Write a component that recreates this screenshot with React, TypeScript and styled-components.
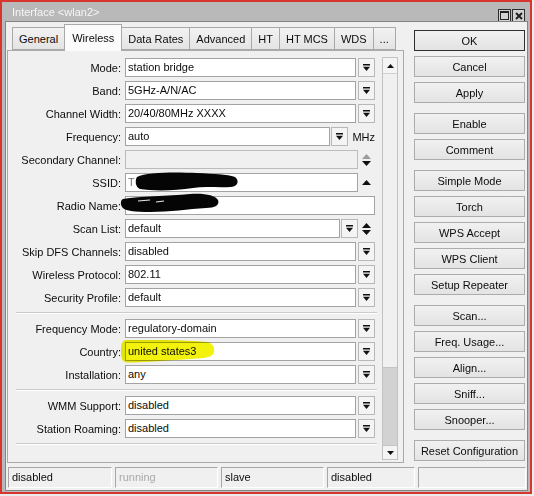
import React from 'react'
import styled, { createGlobalStyle } from 'styled-components'

const GlobalStyle = createGlobalStyle`
  html, body {
    margin: 0;
    padding: 0;
    background: #ececec;
  }
  body {
    font-family: "Liberation Sans", Arial, sans-serif;
    font-size: 11px;
    color: #0c0c0c;
  }
`

type FieldKind = 'drop' | 'freq' | 'disabled' | 'ssid' | 'plain' | 'scan'

type RowDef = {
  label: string
  value?: string
  kind: FieldKind
}

const rowGroups: RowDef[][] = [
  [
    { label: 'Mode:', value: 'station bridge', kind: 'drop' },
    { label: 'Band:', value: '5GHz-A/N/AC', kind: 'drop' },
    { label: 'Channel Width:', value: '20/40/80MHz XXXX', kind: 'drop' },
    { label: 'Frequency:', value: 'auto', kind: 'freq' },
    { label: 'Secondary Channel:', kind: 'disabled' },
    { label: 'SSID:', value: 'T', kind: 'ssid' },
    { label: 'Radio Name:', kind: 'plain' },
    { label: 'Scan List:', value: 'default', kind: 'scan' },
    { label: 'Skip DFS Channels:', value: 'disabled', kind: 'drop' },
    { label: 'Wireless Protocol:', value: '802.11', kind: 'drop' },
    { label: 'Security Profile:', value: 'default', kind: 'drop' }
  ],
  [
    { label: 'Frequency Mode:', value: 'regulatory-domain', kind: 'drop' },
    { label: 'Country:', value: 'united states3', kind: 'drop' },
    { label: 'Installation:', value: 'any', kind: 'drop' }
  ],
  [
    { label: 'WMM Support:', value: 'disabled', kind: 'drop' },
    { label: 'Station Roaming:', value: 'disabled', kind: 'drop' }
  ]
]

const tabs = ['General', 'Wireless', 'Data Rates', 'Advanced', 'HT', 'HT MCS', 'WDS', '...']

const buttonGroups = [
  ['OK', 'Cancel', 'Apply'],
  ['Enable', 'Comment'],
  ['Simple Mode', 'Torch', 'WPS Accept', 'WPS Client', 'Setup Repeater'],
  ['Scan...', 'Freq. Usage...', 'Align...', 'Sniff...', 'Snooper...'],
  ['Reset Configuration']
]

const statusCells = [
  { text: 'disabled', width: 104 },
  { text: 'running', width: 103, muted: true },
  { text: 'slave', width: 103 },
  { text: 'disabled', width: 88 },
  { text: '', width: 0 }
]

const Window = styled.div`
  box-sizing: border-box;
  width: 532px;
  height: 494px;
  border: 2px solid #d8352f;
  background: #b9b9b9;
  padding: 0 2px 1px 3px;
  display: flex;
  flex-direction: column;
`

const TitleBar = styled.div`
  height: 19px;
  display: flex;
  align-items: center;
  padding-left: 7px;
  color: #f6f6f6;
  font-size: 11px;
`

const TitleText = styled.span`
  flex: 1;
`

const TitleButtons = styled.div`
  display: flex;
  gap: 1px;
  align-self: flex-end;
  margin: 0 3px -1px 0;
`

const TitleButton = styled.div`
  box-sizing: border-box;
  width: 13px;
  height: 13px;
  border: 1px solid #2e2e2e;
  background: #d2d2d2;
  display: flex;
  align-items: center;
  justify-content: center;
`

const Client = styled.div`
  flex: 1;
  border: 1px solid #858585;
  background: #f0f0f0;
  display: flex;
  flex-direction: column;
  min-height: 0;
`

const Main = styled.div`
  flex: 1;
  display: flex;
  padding: 2px 0 0 1px;
  min-height: 0;
`

const LeftColumn = styled.div`
  width: 397px;
  display: flex;
  flex-direction: column;
`

const TabBar = styled.div`
  height: 26px;
  display: flex;
  align-items: flex-end;
  padding-left: 5px;
`

const Tab = styled.div<{ $active?: boolean }>`
  box-sizing: border-box;
  height: ${p => (p.$active ? 27 : 23)}px;
  margin-bottom: ${p => (p.$active ? -1 : 0)}px;
  padding: 0 ${p => (p.$active ? 7 : 6)}px;
  display: flex;
  align-items: center;
  border: 1px solid #a9a9a9;
  border-bottom: ${p => (p.$active ? 'none' : '1px solid #a9a9a9')};
  margin-left: -1px;
  background: ${p => (p.$active ? '#fbfbfb' : 'linear-gradient(#f2f2f2, #e4e4e4)')};
  position: relative;
  z-index: ${p => (p.$active ? 2 : 1)};
  white-space: nowrap;
  &:first-child {
    margin-left: 0;
  }
`

const Panel = styled.div`
  flex: 1;
  border: 1px solid #a9a9a9;
  background: #f0f0f0;
  display: flex;
  min-height: 0;
`

const Form = styled.div`
  flex: 1;
  padding-top: 7px;
  display: flex;
  flex-direction: column;
  gap: 4px;
`

const Row = styled.div`
  position: relative;
  height: 19px;
  display: flex;
  align-items: center;
`

const Label = styled.div`
  width: 113px;
  margin-right: 4px;
  text-align: right;
  white-space: nowrap;
`

const Field = styled.div`
  width: 250px;
  height: 19px;
  display: flex;
  align-items: center;
`

const Input = styled.div<{ $disabled?: boolean }>`
  position: relative;
  flex: 1;
  box-sizing: border-box;
  height: 19px;
  border: 1px solid ${p => (p.$disabled ? '#bcbcbc' : '#a3a3a3')};
  background: ${p => (p.$disabled ? '#f0f0f0' : '#ffffff')};
  padding-left: 2px;
  line-height: 17px;
  white-space: nowrap;
`

const DropButton = styled.div<{ $gap: number }>`
  box-sizing: border-box;
  width: 17px;
  height: 19px;
  margin-left: ${p => p.$gap}px;
  border: 1px solid #b8b8b8;
  background: #f4f4f4;
  display: flex;
  align-items: center;
  justify-content: center;
`

const Spinner = styled.div`
  width: 17px;
  height: 19px;
  display: flex;
  flex-direction: column;
  align-items: center;
  justify-content: center;
  gap: 2px;
`

const Suffix = styled.span`
  margin-left: 4px;
`

const Separator = styled.div`
  margin: 1px 5px 1px 8px;
  border-top: 1px solid #cbcbcb;
  border-bottom: 1px solid #ffffff;
`

const Overlay = styled.svg<{ $left: number; $top: number; $blend?: boolean }>`
  position: absolute;
  left: ${p => p.$left}px;
  top: ${p => p.$top}px;
  pointer-events: none;
  mix-blend-mode: ${p => (p.$blend ? 'multiply' : 'normal')};
`

const Scrollbar = styled.div`
  box-sizing: border-box;
  width: 16px;
  margin: 6px 5px 2px 0;
  border: 1px solid #c2c2c2;
  background: #eeeeee;
  display: flex;
  flex-direction: column;
`

const ScrollArrow = styled.div<{ $height: number }>`
  height: ${p => p.$height}px;
  display: flex;
  align-items: center;
  justify-content: center;
  background: #f4f4f4;
`

const ScrollTrack = styled.div`
  flex: 1;
  border-top: 1px solid #d0d0d0;
  background: #f0f0f0;
`

const ScrollThumb = styled.div`
  height: 77px;
  background: #d2d2d2;
  border-top: 1px solid #c4c4c4;
  border-bottom: 1px solid #c4c4c4;
`

const ButtonColumn = styled.div`
  width: 111px;
  margin-left: 10px;
  padding-top: 6px;
  display: flex;
  flex-direction: column;
  gap: 10px;
`

const ButtonGroup = styled.div`
  display: flex;
  flex-direction: column;
  gap: 5px;
`

const Button = styled.div<{ $default?: boolean }>`
  box-sizing: border-box;
  height: 21px;
  border: 1px solid ${p => (p.$default ? '#2f2f2f' : '#acacac')};
  background: linear-gradient(#f1f1f1, #e3e3e3);
  display: flex;
  align-items: center;
  justify-content: center;
  white-space: nowrap;
`

const StatusBar = styled.div`
  height: 21px;
  margin: 4px 1px 2px 2px;
  display: flex;
  gap: 3px;
`

const StatusCell = styled.div<{ $muted?: boolean }>`
  box-sizing: border-box;
  height: 21px;
  border: 1px solid;
  border-color: #a6a6a6 #ffffff #ffffff #a6a6a6;
  padding-left: 3px;
  line-height: 19px;
  color: ${p => (p.$muted ? '#a9a9a9' : '#0c0c0c')};
  white-space: nowrap;
`

const DropIcon = () => (
  <svg width="9" height="8" viewBox="0 0 9 8">
    <rect x="1" y="0" width="7" height="1.5" fill="#111" />
    <path d="M1 2.8h7L4.5 7z" fill="#111" />
  </svg>
)

const Triangle = ({ up, color }: { up?: boolean; color: string }) => (
  <svg width="9" height="5" viewBox="0 0 9 5">
    <path d={up ? 'M0 5h9L4.5 0z' : 'M0 0h9L4.5 5z'} fill={color} />
  </svg>
)

const SsidBlob = () => (
  <Overlay $left={9} $top={-2} width="104" height="20" viewBox="0 0 104 20">
    <path
      d="M2 5C12 0 40 0 62 1C78 2 92 2 100 5C104 8 104 14 96 15C82 16 70 14 58 16C40 19 16 19 5 17C0 15 0 8 2 5Z"
      fill="#050505"
    />
  </Overlay>
)

const RadioBlob = () => (
  <Overlay $left={112} $top={-3} width="100" height="21" viewBox="0 0 100 21">
    <path
      d="M3 6C20 3 48 3 70 1C84 0 95 2 98 7C100 12 95 15 86 15C68 16 50 19 30 19C15 19 4 18 2 14C0 10 1 7 3 6Z"
      fill="#050505"
    />
    <path d="M18 8L30 7M36 9L44 8" stroke="#e8e8e8" strokeWidth="1.2" />
  </Overlay>
)

const Highlight = () => (
  <Overlay $left={113} $top={-2} $blend width="94" height="23" viewBox="0 0 94 23">
    <path
      d="M5 0C35 -0.5 65 0 86 2C92 3 94 8 93 12C92 17 86 18 70 19C50 20 25 22.5 6 22.5C1 22.5 0 17 0 11C0 5 1 0 5 0Z"
      fill="#f2f20c"
    />
  </Overlay>
)

const renderField = (row: RowDef) => {
  switch (row.kind) {
    case 'drop':
      return (
        <>
          <Input>{row.value}</Input>
          <DropButton $gap={2}><DropIcon /></DropButton>
        </>
      )
    case 'freq':
      return (
        <>
          <Input>{row.value}</Input>
          <DropButton $gap={1}><DropIcon /></DropButton>
          <Suffix>MHz</Suffix>
        </>
      )
    case 'disabled':
      return (
        <>
          <Input $disabled />
          <Spinner>
            <Triangle up color="#9c9c9c" />
            <Triangle color="#111" />
          </Spinner>
        </>
      )
    case 'ssid':
      return (
        <>
          <Input style={{ color: '#777' }}>
            {row.value}
            <SsidBlob />
          </Input>
          <Spinner>
            <Triangle up color="#111" />
          </Spinner>
        </>
      )
    case 'scan':
      return (
        <>
          <Input>{row.value}</Input>
          <DropButton $gap={1}><DropIcon /></DropButton>
          <Spinner>
            <Triangle up color="#111" />
            <Triangle color="#111" />
          </Spinner>
        </>
      )
    default:
      return <Input>{row.value}</Input>
  }
}

export default function App() {
  return (
    <>
      <GlobalStyle />
      <Window>
        <TitleBar>
          <TitleText>Interface &lt;wlan2&gt;</TitleText>
          <TitleButtons>
            <TitleButton>
              <svg width="9" height="9" viewBox="0 0 9 9">
                <rect x="0.5" y="0.5" width="8" height="8" fill="none" stroke="#222" />
                <rect x="0" y="0" width="9" height="2" fill="#222" />
              </svg>
            </TitleButton>
            <TitleButton>
              <svg width="8" height="8" viewBox="0 0 8 8">
                <path d="M1 1L7 7M7 1L1 7" stroke="#222" strokeWidth="2" />
              </svg>
            </TitleButton>
          </TitleButtons>
        </TitleBar>
        <Client>
          <Main>
            <LeftColumn>
              <TabBar>
                {tabs.map(t => (
                  <Tab key={t} $active={t === 'Wireless'}>{t}</Tab>
                ))}
              </TabBar>
              <Panel>
                <Form>
                  {rowGroups.map((group, gi) => (
                    <React.Fragment key={gi}>
                      {group.map(row => (
                        <Row key={row.label}>
                          <Label>{row.label}</Label>
                          <Field>{renderField(row)}</Field>
                          {row.label === 'Radio Name:' && <RadioBlob />}
                          {row.label === 'Country:' && <Highlight />}
                        </Row>
                      ))}
                      <Separator />
                    </React.Fragment>
                  ))}
                </Form>
                <Scrollbar>
                  <ScrollArrow $height={15}>
                    <svg width="7" height="4" viewBox="0 0 7 4"><path d="M0 4h7L3.5 0z" fill="#111" /></svg>
                  </ScrollArrow>
                  <ScrollTrack />
                  <ScrollThumb />
                  <ScrollArrow $height={13}>
                    <svg width="7" height="4" viewBox="0 0 7 4"><path d="M0 0h7L3.5 4z" fill="#111" /></svg>
                  </ScrollArrow>
                </Scrollbar>
              </Panel>
            </LeftColumn>
            <ButtonColumn>
              {buttonGroups.map((group, gi) => (
                <ButtonGroup key={gi}>
                  {group.map(b => (
                    <Button key={b} $default={b === 'OK'}>{b}</Button>
                  ))}
                </ButtonGroup>
              ))}
            </ButtonColumn>
          </Main>
          <StatusBar>
            {statusCells.map((c, i) => (
              <StatusCell
                key={i}
                $muted={c.muted}
                style={c.width ? { width: c.width } : { flex: 1 }}
              >
                {c.text}
              </StatusCell>
            ))}
          </StatusBar>
        </Client>
      </Window>
    </>
  )
}
